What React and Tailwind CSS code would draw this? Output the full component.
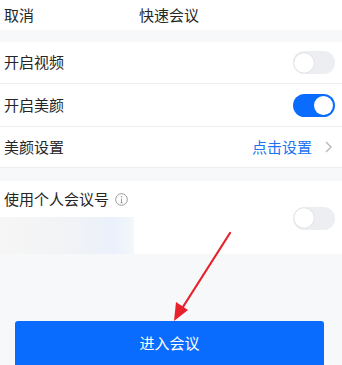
import React from "react";

const font = { fontFamily: '"Noto Sans CJK SC", "Noto Sans", sans-serif' };

function Toggle({ on }) {
  return on ? (
    <div className="w-[42px] h-[23px] rounded-full bg-[#0a6cff] flex items-center justify-end pr-[2px]">
      <div className="w-[19px] h-[19px] rounded-full bg-white" />
    </div>
  ) : (
    <div className="w-[42px] h-[23px] rounded-full bg-[#eceef2] flex items-center pl-[1px]">
      <div className="w-[20px] h-[20px] rounded-full bg-white shadow-[0_0_1px_rgba(0,0,0,0.25)]" />
    </div>
  );
}

export default function App() {
  return (
    <div className="w-[342px] h-[365px] bg-[#f7f8fa] flex flex-col overflow-hidden relative text-[#262626]" style={font}>
      <div className="h-[30px] bg-white flex items-center relative px-[4px] text-[15px]">
        <span>取消</span>
        <span className="absolute left-[139px]">快速会议</span>
      </div>
      <div className="h-[12px]" />
      <div className="bg-white flex flex-col text-[15px]">
        <div className="h-[42px] flex items-center justify-between pl-[4px] pr-[7px] border-b border-[#eceef0]">
          <span>开启视频</span>
          <Toggle on={false} />
        </div>
        <div className="h-[43px] flex items-center justify-between pl-[4px] pr-[7px] border-b border-[#eceef0]">
          <span>开启美颜</span>
          <Toggle on />
        </div>
        <div className="h-[41px] flex items-center justify-between pl-[4px] pr-[10px] border-b border-[#eceef0]">
          <span>美颜设置</span>
          <div className="flex items-center gap-[13px]">
            <span className="text-[#1a73f0]">点击设置</span>
            <svg width="7" height="12" viewBox="0 0 7 12">
              <path d="M1 1l5 5-5 5" fill="none" stroke="#b8b8bc" strokeWidth="1.4" />
            </svg>
          </div>
        </div>
      </div>
      <div className="h-[13px]" />
      <div className="bg-white h-[73px] flex relative text-[15px]">
        <div className="flex flex-col w-[134px]">
          <div className="h-[36px] flex items-center pl-[4px] gap-[6px] whitespace-nowrap">
            <span>使用个人会议号</span>
            <svg width="13" height="13" viewBox="0 0 13 13">
              <circle cx="6.5" cy="6.5" r="5.8" fill="none" stroke="#999" strokeWidth="1" />
              <circle cx="6.5" cy="3.8" r="0.8" fill="#999" />
              <path d="M6.5 5.6v4.2M5.5 9.8h2" stroke="#999" strokeWidth="1" />
            </svg>
          </div>
          <div className="flex-1 bg-[linear-gradient(90deg,#f6f6f6_0%,#f2f3f5_50%,#eaf1fb_85%,#f4f7fb_100%)]" />
        </div>
        <div className="flex-1 flex items-center justify-end pr-[7px] pt-[1px]">
          <Toggle on={false} />
        </div>
      </div>
      <div className="flex-1" />
      <div className="ml-[15px] mr-[18px] h-[44px] bg-[#0a6cff] rounded-t-[3px] flex items-center justify-center text-white text-[15px]">
        进入会议
      </div>
      <svg className="absolute left-0 top-0 pointer-events-none" width="342" height="365">
        <line x1="230" y1="233" x2="181" y2="310" stroke="#e8212b" strokeWidth="2.2" strokeLinecap="round" />
        <polygon points="174,321 176,302 188,310" fill="#e8212b" />
      </svg>
    </div>
  );
}
